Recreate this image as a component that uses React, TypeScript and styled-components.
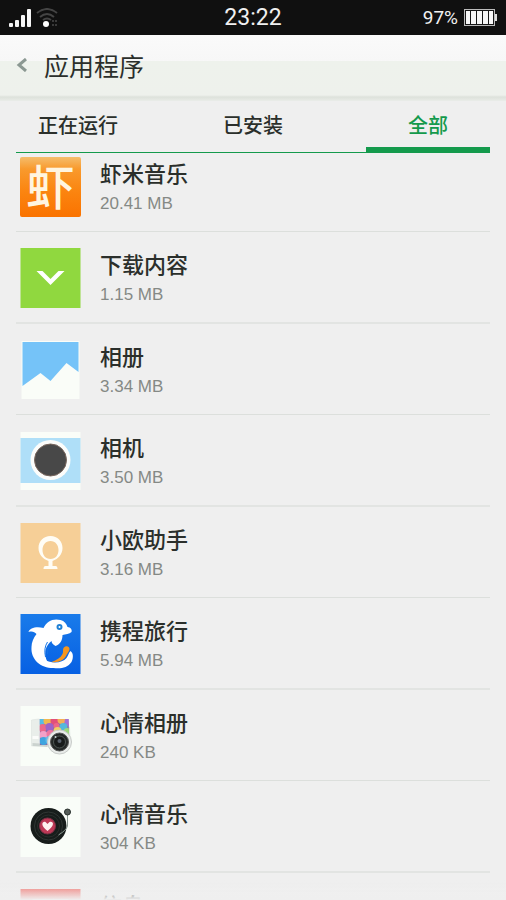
import React, { useState } from 'react';
import styled, { createGlobalStyle } from 'styled-components';

const cjk = '"Noto Sans CJK SC", sans-serif';
const green = '#149a4c';

const GlobalStyle = createGlobalStyle`
  * { box-sizing: border-box; }
  body { margin: 0; background: #efefef; }
  button { margin: 0; padding: 0; border: 0; background: none; color: inherit; cursor: pointer; }
`;

const Screen = styled.div`
  display: flex;
  flex-direction: column;
  height: 100vh;
  overflow: hidden;
  background: #efefef;
  color: #2b2f2b;
  font-family: ${cjk};
`;

const StatusBar = styled.div`
  display: grid;
  grid-template-columns: 1fr auto 1fr;
  align-items: center;
  flex: none;
  height: 35px;
  padding: 0 9px;
  background: #101010;
  color: #f0f0f0;
  font-family: Roboto, sans-serif;
`;

const StatusIcons = styled.div`
  display: flex;
  align-items: center;
  gap: 4px;
`;

const Clock = styled.time`
  font-size: 23px;
  line-height: 35px;
`;

const Battery = styled.div`
  display: flex;
  align-items: center;
  justify-content: flex-end;
  gap: 6px;
  font-size: 19px;
  line-height: 35px;
`;

const Header = styled.header`
  display: flex;
  align-items: center;
  gap: 16px;
  flex: none;
  height: 66px;
  padding: 0 16px 6px;
  border-bottom: 1px solid #e8ebe7;
  background: linear-gradient(#fafafa 0, #f7f7f7 26px, #eef2ec 26px, #eef1ec 60px, #dde2db 62px, #e6e9e4 65px);
`;

const BackButton = styled.button`
  display: flex;
  width: 12px;
  height: 40px;
  align-items: center;
`;

const Title = styled.h1`
  margin: 0;
  font-size: 25px;
  font-weight: 400;
  line-height: 40px;
`;

const Tabs = styled.nav`
  display: flex;
  justify-content: space-between;
  flex: none;
  height: 52px;
  margin: 0 16px;
  border-bottom: 1px solid ${green};
`;

const Tab = styled.button<{ $active: boolean }>`
  width: 124px;
  height: 52px;
  padding-top: 2px;
  border-bottom: 6px solid ${(p) => (p.$active ? green : 'transparent')};
  background-clip: padding-box;
  color: ${(p) => (p.$active ? green : 'inherit')};
  font-family: ${cjk};
  font-size: 20px;
  font-weight: 500;
  line-height: 40px;
`;

const List = styled.ul`
  flex: 1;
  min-height: 0;
  margin: 0;
  padding: 4px 16px 0;
  overflow: hidden;
  list-style: none;
`;

const Row = styled.li`
  border-bottom: 1px solid #dcdfdc;
  & + & { padding-top: 16px; }
  &:nth-child(even) { border-bottom: 2px solid #e2e4e2; }
`;

const RowButton = styled.button`
  display: flex;
  gap: 19px;
  width: 100%;
  padding: 0 4px 14px;
  text-align: left;
`;

const IconBox = styled.span`
  flex: none;
  width: 61px;
  height: 60px;
  svg { display: block; width: 100%; height: 100%; }
`;

const XiamiIcon = styled.span`
  display: block;
  height: 60px;
  border-radius: 2px;
  background: linear-gradient(#f5bd6c 0, #f99a2d 12px, #fb8510 34px, #fa7300 60px);
  color: #fff5e0;
  font-family: ${cjk};
  font-size: 48px;
  font-weight: 500;
  line-height: 54px;
  text-align: center;
`;

const Details = styled.span`
  display: flex;
  flex-direction: column;
`;

const Name = styled.span`
  font-family: ${cjk};
  font-size: 22px;
  font-weight: 500;
  line-height: 30px;
`;

const Size = styled.span`
  height: 30px;
  color: #858985;
  font-family: "Liberation Sans", sans-serif;
  font-size: 17px;
  line-height: 34px;
`;

const BottomFade = styled.div`
  position: fixed;
  right: 0;
  bottom: 0;
  left: 0;
  height: 20px;
  background: linear-gradient(rgba(239, 239, 239, 0), #efefef);
  pointer-events: none;
`;

const SignalIcon = () => (
  <svg width="23" height="20" viewBox="0 0 23 20" fill="#f6f6f6" aria-hidden="true">
    <rect x="0" y="15" width="4" height="4" rx="1" />
    <rect x="6" y="12" width="4" height="7" rx="1" />
    <rect x="12" y="7" width="4" height="12" rx="1" />
    <rect x="18" y="1" width="4" height="18" rx="1" />
  </svg>
);

const WifiIcon = () => (
  <svg width="22" height="20" viewBox="0 0 22 20" fill="none" stroke="#444" strokeWidth="2" aria-hidden="true">
    <path d="M1 5Q11 -3 21 5M4 9Q11 3 18 9M7 12Q11 9 15 12" />
    <path d="M17 12v6M20 12v6" stroke="#3a3a3a" strokeDasharray="2 2" />
    <circle cx="10" cy="16" r="3" fill="#fff" stroke="none" />
  </svg>
);

const BatteryIcon = () => (
  <svg width="33" height="19" viewBox="0 0 33 19" aria-hidden="true">
    <rect x="0.5" y="1.5" width="30" height="16" fill="#181818" stroke="#bbb" />
    <path d="M31 6h2v7h-2z" fill="#ddd" />
    <path d="M2 3h4v13H2zM7 3h5v13H7zM13 3h5v13h-5zM19 3h5v13h-5zM25 3h4v13h-4z" fill="#f8f8f8" />
  </svg>
);

const DownloadIcon = () => (
  <svg viewBox="0 0 60 60" aria-hidden="true">
    <path fill="#90d83f" d="M0 0h60v60H0z" />
    <path fill="#fff" d="M16 23h6l8 8 8-8h6L30 37z" />
  </svg>
);

const AlbumIcon = () => (
  <svg viewBox="0 0 60 60" aria-hidden="true">
    <path fill="#fafdf8" d="M1 1h58v58H1z" />
    <path fill="#75c3f8" d="M2 2h56v30L46 23 30 41 20 33 2 46z" />
  </svg>
);

const CameraIcon = () => (
  <svg viewBox="0 0 60 60" aria-hidden="true">
    <path fill="#fafdf8" d="M0 1h60v58H0z" />
    <path fill="#afdff8" d="M0 7h60v45H0z" />
    <circle cx="30" cy="29" r="20" fill="#fcfdfb" />
    <circle cx="30" cy="29" r="16" fill="#484848" stroke="#7a685f" />
  </svg>
);

const AssistantIcon = () => (
  <svg viewBox="0 0 60 60" aria-hidden="true">
    <path fill="#f6cf97" d="M0 0h60v60H0z" />
    <path fill="#fffdf5" fillRule="evenodd" d="M30 13c7 0 12 5 12 12 0 6-4 11-10 13v5h3q2 0 2 3H23q0-3 2-3h3v-5c-6-2-10-7-10-13 0-7 5-12 12-12zm0 5c-5 0-8 4-8 9s3 9 8 9 8-4 8-9-3-9-8-9z" />
  </svg>
);

const DolphinIcon = () => (
  <svg viewBox="0 0 60 60" aria-hidden="true">
    <defs>
      <linearGradient id="sea" x2="0" y2="1">
        <stop stopColor="#197bea" />
        <stop offset="1" stopColor="#0760e3" />
      </linearGradient>
    </defs>
    <path fill="url(#sea)" d="M0 0h60v60H0z" />
    <path fill="#fff" d="M8 18c1-4 8-6 15-4C26 7 33 4 40 6c4 1 6 4 7 7 3 0 5 3 4 5-2 2-6 2-9 3 0 5-2 9-7 11-2-1-4-3-4-5-5 4-7 9-6 15 1 7 5 10 11 9l-1 3C21 55 10 46 11 33c0-5 2-9 5-13-2-2-4-3-8-2z" />
    <path fill="#fff" d="M50 37c3 2 3 7 1 11-4 6-11 7-18 6-6-1-8-4-9-8 8 4 18 3 22-2 2-3 2-5 4-7z" />
    <path fill="#f49620" d="M43 34c2-3 6-2 6 1 0 2-2 4-3 6-2 5-8 8-15 7 5-2 9-4 11-8 1-2 0-4 1-6z" />
    <path fill="none" stroke="#1475e8" strokeWidth="1" d="M27 28q-4 6-2 15M30 31q-4 4-3 9" />
    <circle cx="39" cy="13" r="2" fill="#fff" stroke="#2382d5" strokeWidth="2" />
  </svg>
);

const MoodAlbumIcon = () => (
  <svg viewBox="0 0 60 60" aria-hidden="true">
    <defs>
      <clipPath id="photo"><path d="M19 13h29l1 26H19z" /></clipPath>
    </defs>
    <path fill="#f9fdf8" d="M0 0h60v60H0z" />
    <path fill="#e9eeea" stroke="#d9dfda" strokeWidth=".5" d="M11 14l7-1 31 8 1 18-39 1z" />
    <path fill="#cbd3cf" d="M12 37l15 1v3l-15-1z" />
    <path fill="#fbfcfa" d="M12 30h6v3h-6z" />
    <g clipPath="url(#photo)">
      <path fill="#8e68a5" d="M19 13h31v27H19z" />
      <circle cx="21" cy="15" r="4" fill="#55bce7" />
      <circle cx="27" cy="15" r="4" fill="#f1b84e" />
      <circle cx="34" cy="15" r="4" fill="#e24f7a" />
      <circle cx="41" cy="14" r="4" fill="#f4ad58" />
      <circle cx="48" cy="16" r="4" fill="#a570d4" />
      <circle cx="22" cy="22" r="4" fill="#ec678b" />
      <circle cx="29" cy="21" r="4" fill="#9d62ca" />
      <circle cx="36" cy="20" r="3" fill="#ee6687" />
      <circle cx="43" cy="21" r="4" fill="#54b8db" />
      <circle cx="23" cy="29" r="4" fill="#f3a1c8" />
      <circle cx="30" cy="28" r="4" fill="#ef759f" />
      <circle cx="37" cy="25" r="4" fill="#f0cf66" />
      <circle cx="23" cy="35" r="4" fill="#3fa4df" />
      <circle cx="29" cy="34" r="4" fill="#62bbea" />
      <circle cx="47" cy="26" r="4" fill="#9ed77d" />
    </g>
    <circle cx="39" cy="36" r="12" fill="#e9ecea" stroke="#c8cbc9" />
    <circle cx="39" cy="36" r="9" fill="#242827" stroke="#555" />
    <circle cx="39" cy="36" r="6" fill="#171a1a" stroke="#4f5654" />
    <circle cx="39" cy="35" r="2" fill="#59616c" />
    <circle cx="35" cy="31" r="1" fill="#c7d3d2" />
  </svg>
);

const MoodMusicIcon = () => (
  <svg viewBox="0 0 60 60" aria-hidden="true">
    <path fill="#f9fdf8" d="M0 0h60v60H0z" />
    <circle cx="28" cy="29" r="18" fill="#171d1b" />
    <circle cx="28" cy="29" r="14" fill="none" stroke="#303634" />
    <circle cx="28" cy="29" r="11" fill="none" stroke="#292e2c" />
    <circle cx="27" cy="29" r="8" fill="#bd3956" stroke="#7e2f45" />
    <path fill="#fff1f0" d="M27 34c-8-6-5-10-2-9l2 2 2-2c4-1 6 3-2 9z" />
    <path fill="none" stroke="#8b9992" strokeWidth="1" d="M47 15v14q-1 4-9 9" />
    <circle cx="47" cy="15" r="3" fill="#555d59" stroke="#272f2b" />
  </svg>
);

const MessagesIcon = () => (
  <svg viewBox="0 0 60 60" aria-hidden="true">
    <path fill="#f0605a" d="M0 0h60v60H0z" />
    <path fill="#fff" d="M12 10h36v30H28l-9 9v-9h-7z" />
  </svg>
);

const apps = [
  { name: '虾米音乐', size: '20.41 MB', icon: <XiamiIcon>虾</XiamiIcon> },
  { name: '下载内容', size: '1.15 MB', icon: <DownloadIcon /> },
  { name: '相册', size: '3.34 MB', icon: <AlbumIcon /> },
  { name: '相机', size: '3.50 MB', icon: <CameraIcon /> },
  { name: '小欧助手', size: '3.16 MB', icon: <AssistantIcon /> },
  { name: '携程旅行', size: '5.94 MB', icon: <DolphinIcon /> },
  { name: '心情相册', size: '240 KB', icon: <MoodAlbumIcon /> },
  { name: '心情音乐', size: '304 KB', icon: <MoodMusicIcon /> },
  { name: '信息', size: '', icon: <MessagesIcon /> },
];

const tabNames = ['正在运行', '已安装', '全部'];

export default function App() {
  const [active, setActive] = useState('全部');
  return (
    <Screen>
      <GlobalStyle />
      <StatusBar>
        <StatusIcons><SignalIcon /><WifiIcon /></StatusIcons>
        <Clock>23:22</Clock>
        <Battery>97%<BatteryIcon /></Battery>
      </StatusBar>
      <Header>
        <BackButton aria-label="返回">
          <svg width="12" height="14" viewBox="0 0 12 14" fill="none" stroke="#8b9892" strokeWidth="3" aria-hidden="true">
            <path d="M10 1L3 7l7 6" />
          </svg>
        </BackButton>
        <Title>应用程序</Title>
      </Header>
      <Tabs>
        {tabNames.map((name) => (
          <Tab key={name} $active={name === active} onClick={() => setActive(name)}>{name}</Tab>
        ))}
      </Tabs>
      <List>
        {apps.map((app) => (
          <Row key={app.name}>
            <RowButton>
              <IconBox>{app.icon}</IconBox>
              <Details>
                <Name>{app.name}</Name>
                <Size>{app.size}</Size>
              </Details>
            </RowButton>
          </Row>
        ))}
      </List>
      <BottomFade />
    </Screen>
  );
}
